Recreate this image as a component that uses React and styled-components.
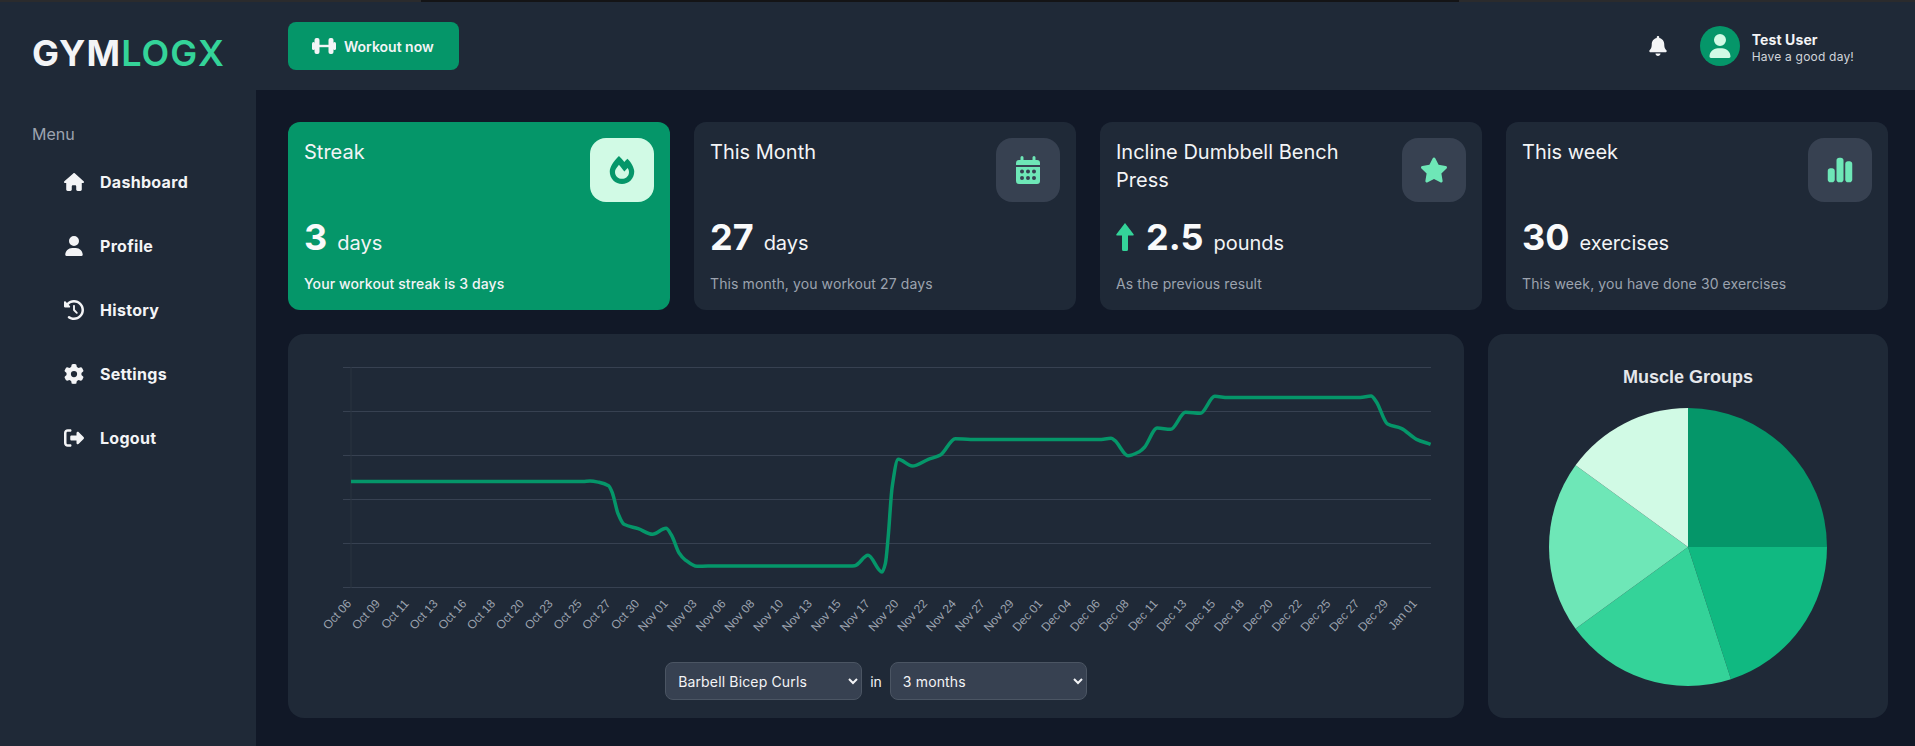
import React from 'react'
import styled, { createGlobalStyle } from 'styled-components'
import { FaBell, FaFireAlt, FaStar } from 'react-icons/fa'
import { FaChartSimple, FaClockRotateLeft, FaGear, FaHouse, FaRightFromBracket, FaUser } from 'react-icons/fa6'

const GlobalStyle = createGlobalStyle`
  * { box-sizing: border-box; }
  html, body { margin: 0; height: 100%; background: #111827; overflow: hidden; }
  body { font-family: Inter, "Liberation Sans", sans-serif; color: #f3f4f6; }
`

const TopEdge = styled.div`
  position: fixed;
  top: 0;
  left: 0;
  right: 0;
  height: 2px;
  background: linear-gradient(to right, #2b2b2d 421px, #141416 421px, #141416 1459px, #2b2b2d 1459px);
`

const Layout = styled.div`
  display: grid;
  grid-template-columns: 256px 1fr;
  height: 746px;
`

const Sidebar = styled.aside`
  background: #1f2937;
  padding: 0 32px;
`

const Logo = styled.div`
  height: 106px;
  display: flex;
  align-items: center;
  font-size: 36px;
  font-weight: 700;
  letter-spacing: 1.1px;
  color: #f3f4f6;
  span { color: #34d399; font-weight: 600; }
`

const MenuLabel = styled.div`
  font-size: 16px;
  line-height: 24px;
  color: #9ca3af;
  margin-top: 16px;
`

const NavList = styled.nav`
  display: flex;
  flex-direction: column;
  margin-top: 4px;
`

const NavItem = styled.a`
  display: flex;
  align-items: center;
  gap: 16px;
  height: 64px;
  padding-left: 32px;
  font-size: 16px;
  font-weight: 700;
  letter-spacing: 0.3px;
  color: #f3f4f6;
  svg { width: 20px; height: 20px; flex: none; }
`

const Right = styled.div`
  display: flex;
  flex-direction: column;
  min-width: 0;
`

const Header = styled.header`
  height: 90px;
  flex: none;
  background: #1f2937;
  display: flex;
  align-items: center;
  justify-content: space-between;
  padding: 2px 61px 0 32px;
`

const WorkoutButton = styled.button`
  display: flex;
  align-items: center;
  gap: 8px;
  height: 48px;
  width: 171px;
  padding: 0 24px;
  border: 0;
  border-radius: 8px;
  background: #059669;
  color: #f3f4f6;
  font: 600 14px Inter, sans-serif;
  white-space: nowrap;
`

const UserBox = styled.div`
  display: flex;
  align-items: center;
`

const Bell = styled(FaBell)`
  width: 20px;
  height: 20px;
  color: #f3f4f6;
  margin-right: 32px;
`

const Avatar = styled.div`
  width: 40px;
  height: 40px;
  border-radius: 50%;
  background: #059669;
  color: #d1fae5;
  display: flex;
  align-items: center;
  justify-content: center;
  margin-right: 12px;
`

const UserText = styled.div`
  margin-top: 3px;
`

const UserName = styled.div`
  font-size: 14px;
  line-height: 18px;
  font-weight: 700;
  letter-spacing: 0.1px;
  color: #f3f4f6;
`

const UserNote = styled.div`
  font-size: 12px;
  line-height: 16px;
  letter-spacing: 0.2px;
  color: #d1d5db;
`

const Main = styled.main`
  flex: 1;
  padding: 32px 27px 28px 32px;
  display: flex;
  flex-direction: column;
  gap: 24px;
`

const StatGrid = styled.section`
  display: grid;
  grid-template-columns: repeat(4, 1fr);
  gap: 24px;
`

const Card = styled.div`
  height: 188px;
  padding: 16px;
  border-radius: 12px;
  background: ${p => (p.$accent ? '#059669' : '#1f2937')};
  display: flex;
  flex-direction: column;
`

const CardTop = styled.div`
  display: flex;
  justify-content: space-between;
  align-items: flex-start;
  gap: 16px;
  height: 64px;
`

const CardTitle = styled.div`
  font-size: 20px;
  line-height: 28px;
  font-weight: 400;
  color: #f3f4f6;
`

const IconTile = styled.div`
  width: 64px;
  height: 64px;
  flex: none;
  border-radius: 16px;
  display: flex;
  align-items: center;
  justify-content: center;
  background: ${p => (p.$accent ? '#d1fae5' : '#374151')};
  color: ${p => (p.$accent ? '#059669' : '#6ee7b7')};
  svg { width: 28px; height: 28px; }
`

const ValueRow = styled.div`
  display: flex;
  align-items: baseline;
  gap: 10px;
  height: 40px;
  margin-top: 15px;
  line-height: 40px;
`

const Value = styled.span`
  font-size: 36px;
  font-weight: 700;
  color: #f9fafb;
`

const Unit = styled.span`
  font-size: 20px;
  color: #f3f4f6;
`

const TrendArrow = styled.svg`
  width: 18px;
  height: 28px;
  color: #34d399;
  align-self: center;
  margin-right: 2px;
`

const CardNote = styled.div`
  margin-top: 17px;
  font-size: 14px;
  line-height: 20px;
  letter-spacing: 0.1px;
  font-weight: ${p => (p.$accent ? 500 : 400)};
  color: ${p => (p.$accent ? '#f3f4f6' : '#9ca3af')};
`

const ChartRow = styled.section`
  display: grid;
  grid-template-columns: 1fr 400px;
  gap: 24px;
`

const ChartCard = styled.div`
  height: 384px;
  border-radius: 16px;
  background: #1f2937;
  display: flex;
  flex-direction: column;
`

const ChartSvg = styled.svg`
  display: block;
  width: 1176px;
  height: 328px;
`

const AxisLabel = styled.text`
  font: 12px "Liberation Sans", Arial, sans-serif;
  fill: #9ca3af;
`

const Filters = styled.div`
  display: flex;
  justify-content: center;
  align-items: center;
  gap: 8px;
  font-size: 14px;
  color: #f3f4f6;
`

const Select = styled.select`
  width: 197px;
  height: 38px;
  padding: 0 8px;
  border: 1px solid #4b5563;
  border-radius: 8px;
  background: #374151;
  color: #f3f4f6;
  font: 14px Inter, sans-serif;
  letter-spacing: 0.15px;
`

const PieCard = styled.div`
  height: 384px;
  border-radius: 16px;
  background: #1f2937;
  display: flex;
  flex-direction: column;
  align-items: center;
  padding-top: 32px;
`

const PieTitle = styled.div`
  font: 700 18px/22px "Liberation Sans", Arial, sans-serif;
  color: #e5e7eb;
`

const PieSvg = styled.svg`
  display: block;
  width: 278px;
  height: 278px;
  margin-top: 20px;
`

const labels = [
  'Oct 06', 'Oct 09', 'Oct 11', 'Oct 13', 'Oct 16', 'Oct 18', 'Oct 20', 'Oct 23', 'Oct 25', 'Oct 27', 'Oct 30',
  'Nov 01', 'Nov 03', 'Nov 06', 'Nov 08', 'Nov 10', 'Nov 13', 'Nov 15', 'Nov 17', 'Nov 20', 'Nov 22', 'Nov 24', 'Nov 27', 'Nov 29',
  'Dec 01', 'Dec 04', 'Dec 06', 'Dec 08', 'Dec 11', 'Dec 13', 'Dec 15', 'Dec 18', 'Dec 20', 'Dec 22', 'Dec 25', 'Dec 27', 'Dec 29',
  'Jan 01',
]

const gridY = [367.5, 411.5, 455.5, 499.5, 543.5, 587.5]

// traced from the chart, page coordinates
const points = [
  [351, 481.5], [583, 481.5], [590, 481], [599, 482.3], [608.6, 485.7], [612.5, 493.3], [617.9, 513.3], [624, 524.3],
  [638.2, 528.7], [652.5, 534.3], [666, 528.3], [671.4, 535], [679.3, 553.3], [684.6, 559.3], [697, 566.3], [707.9, 566],
  [850, 566], [854.8, 565.7], [868, 555.3], [882, 572], [885.4, 563.3], [888.2, 536.7], [892.2, 486.7], [898.2, 459.3],
  [912.3, 466], [928.3, 459.3], [940.4, 455], [955.3, 438.7], [970.5, 439.5], [1099, 439.5], [1111, 438.3], [1115, 440.7],
  [1128, 455.7], [1139.3, 451.7], [1144.5, 447.3], [1157.3, 428], [1170.6, 429.3], [1185.5, 412.3], [1200.3, 413.3],
  [1214.8, 396.3], [1227.7, 397.5], [1360.2, 397.5], [1371, 396], [1376.3, 401.7], [1387.6, 424], [1401.2, 428.3],
  [1416.5, 439.3], [1430.6, 444.3],
]

// monotone cubic so the long flat runs don't overshoot
const smoothPath = pts => {
  const slopes = pts.slice(1).map((p, i) => (p[1] - pts[i][1]) / (p[0] - pts[i][0]))
  const tangents = pts.map((_, i) => {
    if (i === 0) return slopes[0]
    if (i === pts.length - 1) return slopes[i - 1]
    if (slopes[i - 1] * slopes[i] <= 0) return 0
    return (2 * slopes[i - 1] * slopes[i]) / (slopes[i - 1] + slopes[i])
  })
  let d = `M${pts[0][0]} ${pts[0][1]}`
  for (let i = 1; i < pts.length; i++) {
    const dx = (pts[i][0] - pts[i - 1][0]) / 3
    d += `C${pts[i - 1][0] + dx} ${pts[i - 1][1] + tangents[i - 1] * dx} ${pts[i][0] - dx} ${pts[i][1] - tangents[i] * dx} ${pts[i][0]} ${pts[i][1]}`
  }
  return d
}

const slices = [
  { share: 25, color: '#059669' },
  { share: 20, color: '#10b981' },
  { share: 20, color: '#34d399' },
  { share: 20, color: '#6ee7b7' },
  { share: 15, color: '#d1fae5' },
]

const slicePath = (from, to) => {
  const at = s => {
    const a = (s / 100) * 2 * Math.PI
    return `${139 + 139 * Math.sin(a)} ${139 - 139 * Math.cos(a)}`
  }
  return `M139 139L${at(from)}A139 139 0 0 1 ${at(to)}Z`
}

const DumbbellIcon = () => (
  <svg width="24" height="18" viewBox="0 0 24 18" fill="currentColor">
    <rect x="0" y="5" width="3" height="8" rx="1.5" />
    <rect x="2.5" y="1" width="5" height="16" rx="2" />
    <rect x="7" y="7.8" width="10" height="2.4" />
    <rect x="16.5" y="1" width="5" height="16" rx="2" />
    <rect x="21" y="5" width="3" height="8" rx="1.5" />
  </svg>
)

const CalendarIcon = () => (
  <svg viewBox="0 0 24 28" fill="currentColor">
    <path d="M6 0a1.5 1.5 0 0 1 1.5 1.5V4h9V1.5a1.5 1.5 0 0 1 3 0V4H21a3 3 0 0 1 3 3v2H0V7a3 3 0 0 1 3-3h1.5V1.5A1.5 1.5 0 0 1 6 0z" />
    <path fillRule="evenodd" d="M0 11h24v14a3 3 0 0 1-3 3H3a3 3 0 0 1-3-3zm6 2.6a2 2 0 1 0 0 4 2 2 0 0 0 0-4zm6 0a2 2 0 1 0 0 4 2 2 0 0 0 0-4zm6 0a2 2 0 1 0 0 4 2 2 0 0 0 0-4zM6 20a2 2 0 1 0 0 4 2 2 0 0 0 0-4zm6 0a2 2 0 1 0 0 4 2 2 0 0 0 0-4zm6 0a2 2 0 1 0 0 4 2 2 0 0 0 0-4z" />
  </svg>
)

const nav = [
  { label: 'Dashboard', icon: <FaHouse /> },
  { label: 'Profile', icon: <FaUser /> },
  { label: 'History', icon: <FaClockRotateLeft /> },
  { label: 'Settings', icon: <FaGear /> },
  { label: 'Logout', icon: <FaRightFromBracket /> },
]

const stats = [
  { title: 'Streak', icon: <FaFireAlt />, value: '3', unit: 'days', note: 'Your workout streak is 3 days', accent: true },
  { title: 'This Month', icon: <CalendarIcon />, value: '27', unit: 'days', note: 'This month, you workout 27 days' },
  { title: 'Incline Dumbbell Bench Press', icon: <FaStar />, value: '2.5', unit: 'pounds', note: 'As the previous result', trend: true },
  { title: 'This week', icon: <FaChartSimple />, value: '30', unit: 'exercises', note: 'This week, you have done 30 exercises' },
]

export default function App() {
  let total = 0
  return (
    <>
      <GlobalStyle />
      <Layout>
        <Sidebar>
          <Logo>GYM<span>LOGX</span></Logo>
          <MenuLabel>Menu</MenuLabel>
          <NavList>
            {nav.map(n => (
              <NavItem key={n.label}>{n.icon}{n.label}</NavItem>
            ))}
          </NavList>
        </Sidebar>
        <Right>
          <Header>
            <WorkoutButton><DumbbellIcon />Workout now</WorkoutButton>
            <UserBox>
              <Bell />
              <Avatar><FaUser size={24} /></Avatar>
              <UserText>
                <UserName>Test User</UserName>
                <UserNote>Have a good day!</UserNote>
              </UserText>
            </UserBox>
          </Header>
          <Main>
            <StatGrid>
              {stats.map(s => (
                <Card key={s.title} $accent={s.accent}>
                  <CardTop>
                    <CardTitle>{s.title}</CardTitle>
                    <IconTile $accent={s.accent}>{s.icon}</IconTile>
                  </CardTop>
                  <ValueRow>
                    {s.trend && (
                      <TrendArrow viewBox="0 0 18 28" fill="currentColor">
                        <path d="M9 0l8.6 11.2c.4.6 0 1.3-.7 1.3H12v14a1.5 1.5 0 0 1-1.5 1.5h-3A1.5 1.5 0 0 1 6 26.5v-14H1.100c-.7 0-1.100-.7-.7-1.300z" />
                      </TrendArrow>
                    )}
                    <Value>{s.value}</Value>
                    <Unit>{s.unit}</Unit>
                  </ValueRow>
                  <CardNote $accent={s.accent}>{s.note}</CardNote>
                </Card>
              ))}
            </StatGrid>
            <ChartRow>
              <ChartCard>
                <ChartSvg viewBox="288 334 1176 328">
                  {gridY.map(y => (
                    <line key={y} x1="343" x2="1431" y1={y} y2={y} stroke="#374151" />
                  ))}
                  <line x1="351" x2="351" y1="367" y2="588" stroke="#2a3441" />
                  <path d={smoothPath(points)} fill="none" stroke="#059669" strokeWidth="3.5" />
                  {labels.map((l, i) => {
                    const x = 352 + i * 28.8
                    return (
                      <AxisLabel key={l} x={x} y="604" textAnchor="end" transform={`rotate(-48 ${x} 604)`}>{l}</AxisLabel>
                    )
                  })}
                </ChartSvg>
                <Filters>
                  <Select defaultValue="curls">
                    <option value="curls">Barbell Bicep Curls</option>
                  </Select>
                  in
                  <Select defaultValue="3m">
                    <option value="3m">3 months</option>
                  </Select>
                </Filters>
              </ChartCard>
              <PieCard>
                <PieTitle>Muscle Groups</PieTitle>
                <PieSvg viewBox="0 0 278 278">
                  {slices.map(s => {
                    const from = total
                    total += s.share
                    return <path key={s.color} d={slicePath(from, total)} fill={s.color} />
                  })}
                </PieSvg>
              </PieCard>
            </ChartRow>
          </Main>
        </Right>
      </Layout>
      <TopEdge />
    </>
  )
}
